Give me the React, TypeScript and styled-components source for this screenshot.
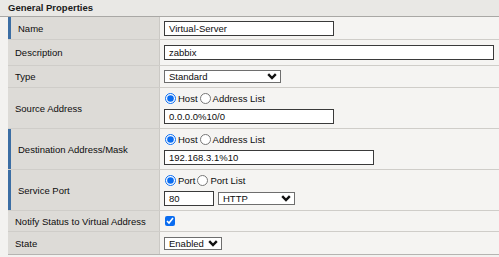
import React from 'react';
import styled, { createGlobalStyle } from 'styled-components';

const GlobalStyle = createGlobalStyle`
  html, body {
    margin: 0;
    padding: 0;
    background: #f3f2f0;
  }
  body {
    font-family: "Liberation Sans", Arial, sans-serif;
    font-size: 9.5px;
    color: #0d0d0d;
  }
`;

const Panel = styled.div`
  width: 499px;
`;
const Header = styled.div`
  background: #e9e8e5;
  border-bottom: 1px solid #a9a8a5;
  font-weight: 700;
  height: 16px;
  line-height: 16px;
  padding-left: 8px;
  color: #1a1a1a;
`;
const Table = styled.div`
  margin-left: 8px;
  border-bottom: 1px solid #b5b4b1;
`;
const Row = styled.div<{ $h: number }>`
  display: grid;
  grid-template-columns: 152px 1fr;
  height: ${ p => p.$h }px;
  border-bottom: 1px solid #cfcdc9;
  box-sizing: border-box;
  &:last-child {
    border-bottom: none;
  }
`;
const LabelCell = styled.div<{ $required?: boolean }>`
  background: #dddbd7;
  border-left: ${ p => p.$required ? '3px solid #3c6ea4' : '0' };
  border-right: 1px solid #cbc9c5;
  display: flex;
  align-items: center;
  padding-left: 7px;
`;
const ValueCell = styled.div`
  background: #f5f4f2;
  display: flex;
  flex-direction: column;
  justify-content: center;
  gap: 4px;
  padding-left: 4px;
`;
const TextInput = styled.div<{ $w: number }>`
  box-sizing: border-box;
  width: ${ p => p.$w }px;
  height: 15px;
  border: 1px solid #3a3a3a;
  background: #fff;
  padding-left: 4px;
  line-height: 13px;
`;
const Select = styled.div<{ $w: number }>`
  box-sizing: border-box;
  width: ${ p => p.$w }px;
  height: 13px;
  border: 1px solid #6e6e6e;
  background: #fff;
  padding: 0 3px 0 4px;
  display: flex;
  align-items: center;
  justify-content: space-between;
  line-height: 11px;
`;
const Inline = styled.div`
  display: flex;
  align-items: center;
  gap: 4px;
`;
const RadioGroup = styled.div`
  display: flex;
  align-items: center;
  height: 12px;
  margin-left: 1px;
`;
const RadioLabel = styled.label`
  display: flex;
  align-items: center;
  gap: 2px;
  margin-right: 2px;
`;
const Radio = styled.input`
  width: 11px;
  height: 11px;
  margin: 0;
  accent-color: #0a6cf0;
`;
const Check = styled.input`
  width: 10px;
  height: 10px;
  margin: 0 0 0 1px;
  accent-color: #0a6cf0;
`;

function Chevron() {
  return (
    <svg width="10" height="7" viewBox="0 0 10 7">
      <path d="M1.2 1.2 L5 5 L8.8 1.2" fill="none" stroke="#111" strokeWidth="2.4" />
    </svg>
  );
}

function HostChoice({ a, b, name }: { a: string; b: string; name: string }) {
  return (
    <RadioGroup>
      <RadioLabel><Radio type="radio" name={ name } defaultChecked />{ a }</RadioLabel>
      <RadioLabel><Radio type="radio" name={ name } />{ b }</RadioLabel>
    </RadioGroup>
  );
}

export default function App() {
  return (
    <Panel>
      <GlobalStyle />
      <Header>General Properties</Header>
      <Table>
        <Row $h={ 23 }>
          <LabelCell $required>Name</LabelCell>
          <ValueCell><TextInput $w={ 170 }>Virtual-Server</TextInput></ValueCell>
        </Row>
        <Row $h={ 26 }>
          <LabelCell>Description</LabelCell>
          <ValueCell><TextInput $w={ 330 }>zabbix</TextInput></ValueCell>
        </Row>
        <Row $h={ 22 }>
          <LabelCell>Type</LabelCell>
          <ValueCell><Select $w={ 117 }>Standard<Chevron /></Select></ValueCell>
        </Row>
        <Row $h={ 41 }>
          <LabelCell>Source Address</LabelCell>
          <ValueCell>
            <HostChoice a="Host" b="Address List" name="src" />
            <TextInput $w={ 170 }>0.0.0.0%10/0</TextInput>
          </ValueCell>
        </Row>
        <Row $h={ 41 }>
          <LabelCell $required>Destination Address/Mask</LabelCell>
          <ValueCell>
            <HostChoice a="Host" b="Address List" name="dst" />
            <TextInput $w={ 210 }>192.168.3.1%10</TextInput>
          </ValueCell>
        </Row>
        <Row $h={ 41 }>
          <LabelCell $required>Service Port</LabelCell>
          <ValueCell>
            <HostChoice a="Port" b="Port List" name="port" />
            <Inline>
              <TextInput $w={ 50 }>80</TextInput>
              <Select $w={ 77 }>HTTP<Chevron /></Select>
            </Inline>
          </ValueCell>
        </Row>
        <Row $h={ 21 }>
          <LabelCell>Notify Status to Virtual Address</LabelCell>
          <ValueCell><Check type="checkbox" defaultChecked /></ValueCell>
        </Row>
        <Row $h={ 22 }>
          <LabelCell>State</LabelCell>
          <ValueCell><Select $w={ 58 }>Enabled<Chevron /></Select></ValueCell>
        </Row>
      </Table>
    </Panel>
  );
}
